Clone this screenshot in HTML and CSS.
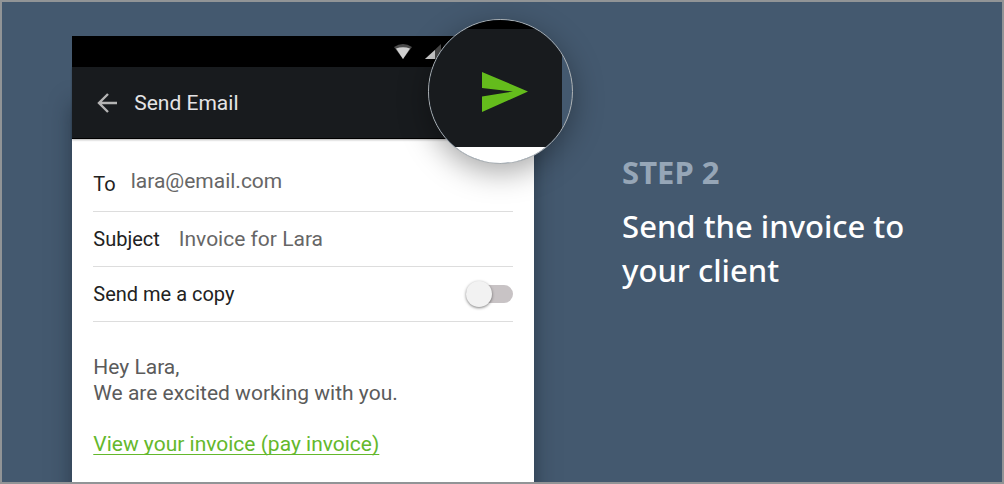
FILE: index.html
```html
<!DOCTYPE html>
<html lang="en">
<head>
    <meta charset="UTF-8">
    <meta name="viewport" content="width=device-width, initial-scale=1.0">
    <title>Step 2 - Send the invoice</title>
    <link rel="stylesheet" href="styles.css">
</head>
<body>

<main class="slide">
    <div class="phone">
        <div class="status-bar">
            <svg width="18" height="16" viewBox="0 0 18 16" aria-hidden="true">
                <path d="M0 3 Q9 -3 18 3 L9 15 Z" fill="#4a4a4a"/>
                <path d="M2 4.500 Q9 2 16 4.500 L9 15 Z" fill="#d0d0d0"/>
            </svg>
            <svg width="16" height="16" viewBox="0 0 16 16" aria-hidden="true">
                <path d="M0 15 L16 0 V15 Z" fill="#4a4a4a"/>
                <path d="M0 15 L10 6 V15 Z" fill="#d0d0d0"/>
            </svg>
        </div>

        <header class="app-bar">
            <button class="back-btn" type="button" aria-label="Back">
                <svg width="22" height="20" viewBox="0 0 22 20" fill="none" stroke="#b4b4b4" stroke-width="2.400" aria-hidden="true">
                    <path d="M21 10 H3 M12 1 L3 10 L12 19"/>
                </svg>
            </button>
            <h1>Send Email</h1>
        </header>

        <form class="email-form">
            <div class="row row-to">
                <label for="to">To</label>
                <input type="email" id="to" value="lara@email.com">
            </div>
            <div class="row row-subject">
                <label for="subject">Subject</label>
                <input type="text" id="subject" value="Invoice for Lara">
            </div>
            <div class="row row-copy">
                <label for="copy">Send me a copy</label>
                <input class="switch" type="checkbox" id="copy">
            </div>
        </form>

        <div class="message">
            <p>Hey Lara,<br>We are excited working with you.</p>
            <a href="#">View your invoice (pay invoice)</a>
        </div>

        <button class="send-btn" type="button" aria-label="Send">
            <span class="lens"></span>
            <svg class="send-icon" width="48" height="42" viewBox="0 0 48 42" aria-hidden="true">
                <path d="M1 1 L47 20.500 L1 41 V25.500 L32 20.500 L1 17 Z" fill="#64bc1c"/>
            </svg>
        </button>
    </div>

    <div class="caption">
        <p class="step">STEP 2</p>
        <h2>Send the invoice to your client</h2>
    </div>
</main>

</body>
</html>
```
FILE: styles.css
```css
* {
    box-sizing: border-box;
}
body {
    margin: 0;
    background-color: #44596f;
    font-family: Roboto, Arial, sans-serif;
    font-size: 20px;
}
h1, h2, p {
    margin: 0;
}
button {
    padding: 0;
    border: none;
    background: none;
    cursor: pointer;
}
.slide {
    display: grid;
    grid-template-columns: minmax(0, 54fr) minmax(0, 36fr);
    column-gap: 88px;
    height: 100vh;
    padding: 34px 72px 0 7%;
    border: 2px solid #919496;
    overflow: hidden;
}
.phone {
    position: relative;
    background: #fff;
    box-shadow: 0 68px 20px rgba(20, 30, 42, 0.5);
}
.status-bar {
    display: flex;
    align-items: center;
    justify-content: flex-end;
    gap: 13px;
    height: 31px;
    padding-right: 93px;
    background: #000;
}
.app-bar {
    display: flex;
    align-items: center;
    gap: 16px;
    height: 72px;
    padding: 0 24px;
    background: #181b1e;
    border-bottom: 1px solid #000;
    box-shadow: 0 1px 2px rgba(0, 0, 0, 0.3);
}
.back-btn {
    display: flex;
}
h1 {
    color: #e4e4e6;
    font-size: 21px;
    font-weight: 400;
}
.email-form {
    padding: 18px 21px 0;
}
.row {
    display: flex;
    align-items: center;
    height: 55px;
    border-bottom: 1px solid #ddd;
    color: #222;
}
.row input[type="email"],
.row input[type="text"] {
    flex: 1;
    min-width: 0;
    padding: 0;
    border: none;
    outline: none;
    background: none;
    color: #666;
    font: inherit;
    font-size: 21px;
}
.row-to {
    gap: 15px;
}
.row-to input {
    align-self: flex-start;
    margin-top: 12px;
}
.row-subject {
    gap: 19px;
}
.row-copy {
    justify-content: space-between;
}
.switch {
    appearance: none;
    display: flex;
    align-items: center;
    width: 47px;
    height: 18px;
    margin: 0;
    border-radius: 9px;
    background: #c8c3c5;
    cursor: pointer;
}
.switch::before {
    content: "";
    width: 26px;
    height: 26px;
    border-radius: 50%;
    background: #f2f2f2;
    box-shadow: 0 1px 3px rgba(0, 0, 0, 0.5);
}
.switch:checked::before {
    margin-left: auto;
    background: #64bc1c;
}
.message {
    padding: 32px 21px;
    color: #5b5b5b;
    font-size: 21px;
    line-height: 26px;
}
.message p {
    margin-bottom: 25px;
}
.message a {
    color: #64b82c;
    text-decoration-thickness: 1px;
    text-underline-offset: 3px;
    text-decoration-skip-ink: none;
}
/* magnified send icon over the corner of the phone */
.send-btn {
    position: absolute;
    top: -17px;
    right: -39px;
    display: grid;
    place-items: center;
    width: 145px;
    height: 145px;
    border: 1px solid #aeb3b6;
    border-radius: 50%;
    background: #44596f;
    box-shadow: 0 8px 30px rgba(0, 0, 0, 0.35);
    overflow: hidden;
}
.lens,
.send-icon {
    grid-area: 1 / 1;
}
.lens {
    justify-self: start;
    width: 133px;
    height: 100%;
    background: linear-gradient(#000 9px, #181b1e 9px, #181b1e 127px, #fff 127px);
}
.send-icon {
    margin-left: 8px;
}
.caption {
    padding-top: 114px;
    color: #fff;
    font-family: "Noto Sans", "Open Sans", sans-serif;
    line-height: 44px;
}
.step {
    margin-bottom: 10px;
    color: #96a6b7;
    font-size: 31px;
    font-weight: 700;
}
h2 {
    max-width: 300px;
    font-size: 31px;
    font-weight: 500;
}
```
